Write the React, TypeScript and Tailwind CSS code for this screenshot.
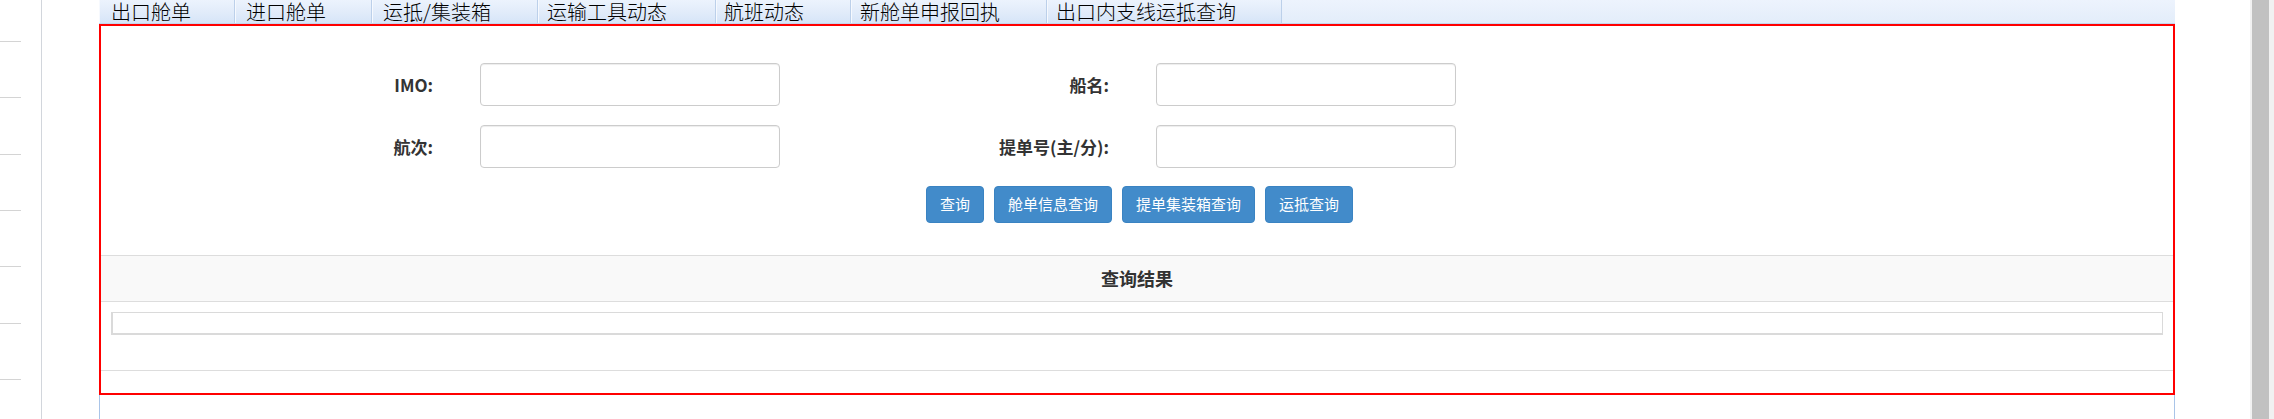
const tabs = [
  { label: "出口舱单", w: "w-[136px]", pl: "pl-[12px]" },
  { label: "进口舱单", w: "w-[137px]", pl: "pl-[11px]" },
  { label: "运抵/集装箱", w: "w-[166px]", pl: "pl-[11px]" },
  { label: "运输工具动态", w: "w-[178px]", pl: "pl-[9px]" },
  { label: "航班动态", w: "w-[135px]", pl: "pl-[8px]" },
  { label: "新舱单申报回执", w: "w-[196px]", pl: "pl-[9px]" },
  { label: "出口内支线运抵查询", w: "w-[235px]", pl: "pl-[9px]" },
]

const buttons = ["查询", "舱单信息查询", "提单集装箱查询", "运抵查询"]

function Field({ label, labelW }: { label: string; labelW: string }) {
  return (
    <>
      <label className={`${labelW} text-right text-[17px] font-bold text-[#333]`}>{label}</label>
      <input
        type="text"
        className="ml-[47px] h-[43px] w-[300px] rounded-[4px] border border-[#cccccc] bg-white shadow-[inset_0_1px_1px_rgba(0,0,0,0.075)] outline-none"
      />
    </>
  )
}

export default function App() {
  return (
    <div className="flex h-[419px] w-[2274px] overflow-hidden bg-white font-['Noto_Sans_CJK_SC',sans-serif]">
      {/* left menu strip */}
      <div className="w-[42px] shrink-0 border-r border-[#d2d6dc] pt-[41px]">
        {Array.from({ length: 7 }).map((_, i) => (
          <div key={i} className="h-[56.33px] w-[21px] border-t border-[#d4d4d4]" />
        ))}
      </div>

      <div className="ml-[57px] flex w-[2076px] shrink-0 flex-col">
        {/* tab strip */}
        <div className="flex h-[24px] border-b border-[#c3d6ef] bg-gradient-to-b from-[#edf3fd] to-[#e3edfa]">
          {tabs.map((t) => (
            <div
              key={t.label}
              className={`${t.w} ${t.pl} h-[23px] shrink-0 border-r border-[#bcd0ea] bg-gradient-to-b from-[#ecf3fd] via-[#e2ecfa] to-[#d6e5f8] text-[20px] font-light leading-[23px] text-black shadow-[inset_1px_0_0_#f6f9fe]`}
            >
              {t.label}
            </div>
          ))}
          <div className="flex-1" />
        </div>

        {/* red outlined content */}
        <div className="flex h-[371px] flex-col border-2 border-[#ff0000] pt-[37px]">
          <div className="flex items-center pl-[191px]">
            <Field label="IMO:" labelW="w-[141px]" />
            <Field label="船名:" labelW="w-[329px]" />
          </div>
          <div className="mt-[19px] flex items-center pl-[191px]">
            <Field label="航次:" labelW="w-[141px]" />
            <Field label="提单号(主/分):" labelW="w-[329px]" />
          </div>

          <div className="mt-[18px] flex justify-center gap-[10px] pl-[5px]">
            {buttons.map((b) => (
              <button
                key={b}
                className="h-[37px] rounded-[4px] border border-[#3a83c2] bg-[#428bca] px-[13px] text-[15px] text-white"
              >
                {b}
              </button>
            ))}
          </div>

          <div className="mt-[32px] flex h-[47px] items-center justify-center border-y border-[#dddddd] bg-[#f9f9f9] text-[18px] font-bold text-[#333]">
            查询结果
          </div>
          <div className="mx-[10px] mt-[10px] h-[23px] border-t border-r border-b-2 border-l-2 border-[#dadada]" />
          <div className="mt-[35px] border-b border-[#dddddd]" />
        </div>

        <div className="flex-1 border-x border-[#a9c4e8]" />
      </div>

      <div className="flex-1" />

      {/* page scrollbar */}
      <div className="w-[24px] shrink-0 bg-[#f1f1f1] pl-[2px]">
        <div className="h-full w-[17px] bg-[#c1c1c1]" />
      </div>
    </div>
  )
}
